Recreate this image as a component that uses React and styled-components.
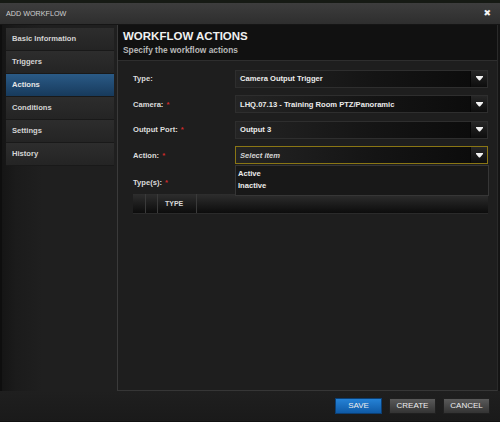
import React from "react";
import styled, { createGlobalStyle } from "styled-components";

const GlobalStyle = createGlobalStyle`
  html, body {
    margin: 0;
    padding: 0;
    background: #141414;
  }
  body {
    font-family: "Liberation Sans", Arial, sans-serif;
  }
`;

const navItems = ["Basic Information", "Triggers", "Actions", "Conditions", "Settings", "History"];

const fields = [
  { label: "Type:", value: "Camera Output Trigger" },
  { label: "Camera:", required: true, value: "LHQ.07.13 - Training Room PTZ/Panoramic" },
  { label: "Output Port:", required: true, value: "Output 3" },
  { label: "Action:", required: true, value: "Select item", placeholder: true, open: true },
];

const Caret = () => (
  <svg width="7" height="5" viewBox="0 0 7 5">
    <path d="M0 0 H7 V1 L4 4.5 H3 L0 1 Z" fill="#f2f2f2" />
  </svg>
);

const App = () => (
  <Dialog>
    <GlobalStyle />
    <TopStrip />
    <TitleBar>
      <Title>ADD WORKFLOW</Title>
      <Close>✖</Close>
    </TitleBar>
    <Body>
      <Sidebar>
        {navItems.map((item) => (
          <NavItem key={item} active={item === "Actions"}>
            {item}
          </NavItem>
        ))}
      </Sidebar>
      <Main>
        <Header>
          <HeaderTitle>WORKFLOW ACTIONS</HeaderTitle>
          <HeaderSub>Specify the workflow actions</HeaderSub>
        </Header>
        <Form>
          {fields.map(({ label, required, value, placeholder, open }) => (
            <Row key={label}>
              <Label>
                {label}
                {required && <Star>*</Star>}
              </Label>
              <SelectWrap>
                <Select focused={open}>
                  <SelectValue placeholder={placeholder}>{value}</SelectValue>
                  <SelectButton>
                    <Caret />
                  </SelectButton>
                </Select>
                {open && (
                  <Options>
                    <Option>Active</Option>
                    <Option>Inactive</Option>
                  </Options>
                )}
              </SelectWrap>
            </Row>
          ))}
          <TypesRow>
            <Label>
              Type(s):<Star>*</Star>
            </Label>
          </TypesRow>
          <TableHead>
            <Col width={13} />
            <Col width={12} />
            <Col width={39}>TYPE</Col>
            <Col grow />
          </TableHead>
        </Form>
      </Main>
    </Body>
    <Footer>
      <Button primary>SAVE</Button>
      <Button>CREATE</Button>
      <Button>CANCEL</Button>
    </Footer>
  </Dialog>
);

export default App;

const Dialog = styled.div`
  width: 500px;
  height: 422px;
  display: flex;
  flex-direction: column;
  background: #1f1f1f;
  overflow: hidden;
`;

const TopStrip = styled.div`
  height: 3px;
  background: #161a14;
`;

const TitleBar = styled.div`
  height: 21px;
  display: flex;
  align-items: center;
  justify-content: space-between;
  padding: 0 9px 0 6px;
  background: linear-gradient(#3d3d3d, #2e2e2e);
  border-bottom: 1px solid #151515;
`;

const Title = styled.span`
  font-size: 7.2px;
  color: #d0d0d0;
`;

const Close = styled.span`
  font-size: 9px;
  color: #f4f4f4;
  font-family: "DejaVu Sans", sans-serif;
`;

const Body = styled.div`
  flex: 1;
  display: flex;
  padding-left: 4px;
  background: linear-gradient(90deg, #151515 0, #1b1b1b 14px, #1f1f1f 40px);
  border-left: 2px solid #0e0e0e;
  border-right: 2px solid #141414;
`;

const Sidebar = styled.div`
  width: 108px;
  padding-top: 3px;
  display: flex;
  flex-direction: column;
`;

const NavItem = styled.div`
  height: 22px;
  display: flex;
  align-items: center;
  padding-left: 6px;
  font-size: 7.6px;
  font-weight: bold;
  color: ${({ active }) => (active ? "#e6e6e6" : "#d4d4d4")};
  background: ${({ active }) =>
    active
      ? "linear-gradient(#2a5a86, #173a5c)"
      : "linear-gradient(#2d2d2d, #242424)"};
  border-bottom: 1px solid #191919;
`;

const Main = styled.div`
  flex: 1;
  margin-left: 3px;
  display: flex;
  flex-direction: column;
  border-left: 1px solid #3a3a3a;
  border-bottom: 1px solid #363636;
  border-right: 1px solid #2a2a2a;
  background: #1e1e1e;
  height: 365px;
`;

const Header = styled.div`
  height: 36px;
  padding: 4px 0 0 5px;
  box-sizing: border-box;
  background: #111111;
  border-bottom: 1px solid #2e2e2e;
`;

const HeaderTitle = styled.div`
  font-size: 11.5px;
  font-weight: bold;
  color: #f0f0f0;
  line-height: 14px;
`;

const HeaderSub = styled.div`
  font-size: 8.4px;
  font-weight: bold;
  color: #b8b8b8;
  margin-top: 2px;
`;

const Form = styled.div`
  padding: 9px 9px 0 15px;
  display: flex;
  flex-direction: column;
`;

const Row = styled.div`
  display: flex;
  align-items: center;
  height: 18px;
  margin-bottom: 7.5px;
`;

const Label = styled.div`
  width: 102px;
  font-size: 7.6px;
  font-weight: bold;
  color: #dcdcdc;
`;

const Star = styled.span`
  color: #d22a2a;
  margin-left: 3px;
`;

const SelectWrap = styled.div`
  position: relative;
  flex: 1;
  height: 100%;
`;

const Select = styled.div`
  display: flex;
  height: 100%;
  box-sizing: border-box;
  border: 1px solid ${({ focused }) => (focused ? "#8a7614" : "#2e2e2e")};
  background: #050505;
`;

const SelectValue = styled.div`
  flex: 1;
  display: flex;
  align-items: center;
  padding-left: 4px;
  margin-right: 1px;
  font-size: 7.6px;
  font-weight: bold;
  font-style: ${({ placeholder }) => (placeholder ? "italic" : "normal")};
  color: ${({ placeholder }) => (placeholder ? "#d4d4d4" : "#ececec")};
  background: linear-gradient(90deg, #242424, #141414 60%, #0c0c0c);
`;

const SelectButton = styled.div`
  width: 16px;
  display: flex;
  align-items: center;
  justify-content: center;
  background: linear-gradient(#262626, #0d0d0d);
`;

const Options = styled.div`
  position: absolute;
  top: 19px;
  left: 0;
  right: -1px;
  z-index: 2;
  padding: 2px 0 3px;
  background: #181818;
  border: 1px solid #363636;
`;

const Option = styled.div`
  height: 12px;
  line-height: 12px;
  padding-left: 2px;
  font-size: 7.6px;
  font-weight: bold;
  color: #ececec;
`;

const TypesRow = styled.div`
  display: flex;
  align-items: center;
  height: 17px;
  margin-top: 2px;
`;

const TableHead = styled.div`
  display: flex;
  height: 19px;
  margin-top: 3px;
  background: linear-gradient(#2e2e2e, #0c0c0c);
  border-bottom: 1px solid #2a2a2a;
`;

const Col = styled.div`
  ${({ grow, width }) => (grow ? "flex: 1;" : `width: ${width}px;`)}
  box-sizing: border-box;
  display: flex;
  align-items: center;
  padding-left: 7px;
  font-size: 7px;
  font-weight: bold;
  color: #d8d8d8;
  border-right: ${({ grow }) => (grow ? "none" : "1px solid #3a3a3a")};
`;

const Footer = styled.div`
  height: 32px;
  display: flex;
  align-items: center;
  justify-content: flex-end;
  gap: 7px;
  padding-right: 10px;
  background: linear-gradient(#1f1f1f, #1a1a1a);
  border-bottom: 1px solid #111;
  box-sizing: border-box;
`;

const Button = styled.div`
  width: 47px;
  height: 16px;
  box-sizing: border-box;
  display: flex;
  align-items: center;
  justify-content: center;
  font-size: 8px;
  color: #eeeeee;
  border: 1px solid ${({ primary }) => (primary ? "#0c3f73" : "#202020")};
  background: ${({ primary }) =>
    primary
      ? "linear-gradient(#2582d6, #0f5aa6)"
      : "linear-gradient(#5a5a5a, #333333)"};
`;
